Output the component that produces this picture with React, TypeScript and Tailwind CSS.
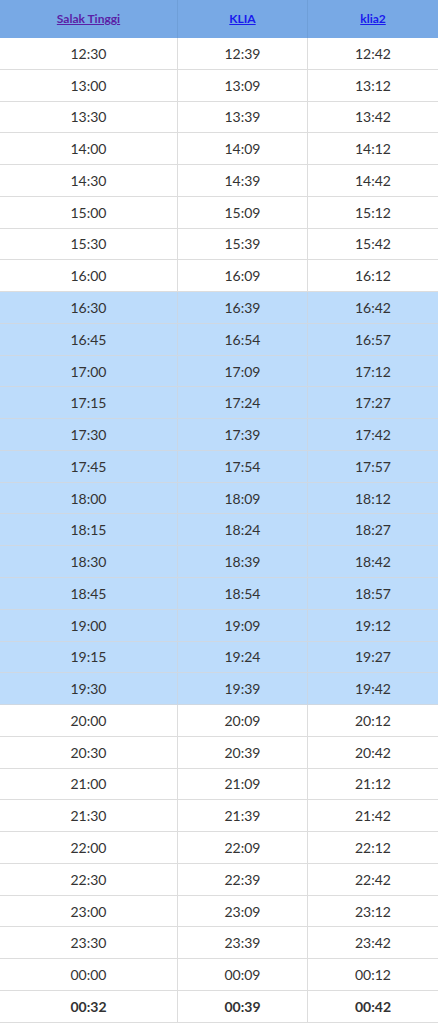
import React from "react";

const rows: [string, string, string, boolean][] = [
  ["12:30", "12:39", "12:42", false],
  ["13:00", "13:09", "13:12", false],
  ["13:30", "13:39", "13:42", false],
  ["14:00", "14:09", "14:12", false],
  ["14:30", "14:39", "14:42", false],
  ["15:00", "15:09", "15:12", false],
  ["15:30", "15:39", "15:42", false],
  ["16:00", "16:09", "16:12", false],
  ["16:30", "16:39", "16:42", true],
  ["16:45", "16:54", "16:57", true],
  ["17:00", "17:09", "17:12", true],
  ["17:15", "17:24", "17:27", true],
  ["17:30", "17:39", "17:42", true],
  ["17:45", "17:54", "17:57", true],
  ["18:00", "18:09", "18:12", true],
  ["18:15", "18:24", "18:27", true],
  ["18:30", "18:39", "18:42", true],
  ["18:45", "18:54", "18:57", true],
  ["19:00", "19:09", "19:12", true],
  ["19:15", "19:24", "19:27", true],
  ["19:30", "19:39", "19:42", true],
  ["20:00", "20:09", "20:12", false],
  ["20:30", "20:39", "20:42", false],
  ["21:00", "21:09", "21:12", false],
  ["21:30", "21:39", "21:42", false],
  ["22:00", "22:09", "22:12", false],
  ["22:30", "22:39", "22:42", false],
  ["23:00", "23:09", "23:12", false],
  ["23:30", "23:39", "23:42", false],
  ["00:00", "00:09", "00:12", false],
  ["00:32", "00:39", "00:42", false],
];

export default function App() {
  return (
    <div className="w-[438px] bg-white" style={{ fontFamily: "Lato, 'Noto Sans', sans-serif" }}>
      <div className="grid grid-cols-[178px_130px_130px] h-[38px] bg-[#78a9e5] text-[12px] font-bold">
        <div className="flex items-center justify-center border-r border-[#6f9fd8]">
          <a href="#" className="underline text-[#5b1fa6]">Salak Tinggi</a>
        </div>
        <div className="flex items-center justify-center border-r border-[#6f9fd8]">
          <a href="#" className="underline text-[#1a1aee]">KLIA</a>
        </div>
        <div className="flex items-center justify-center">
          <a href="#" className="underline text-[#1a1aee]">klia2</a>
        </div>
      </div>
      {rows.map(([a, b, c, hl], i) => {
        const last = i === rows.length - 1;
        return (
          <div
            key={i}
            className={`grid grid-cols-[178px_130px_130px] h-[31.77px] border-b text-[14px] text-[#333333] ${
              hl ? "bg-[#bddcfb] border-[#cfd8e2]" : "bg-white border-[#dddddd]"
            } ${last ? "font-bold" : ""}`}
          >
            <div className={`flex items-center justify-center border-r ${hl ? "border-[#c9d7e6]" : "border-[#dddddd]"}`}>{a}</div>
            <div className={`flex items-center justify-center border-r ${hl ? "border-[#c9d7e6]" : "border-[#dddddd]"}`}>{b}</div>
            <div className="flex items-center justify-center">{c}</div>
          </div>
        );
      })}
    </div>
  );
}
